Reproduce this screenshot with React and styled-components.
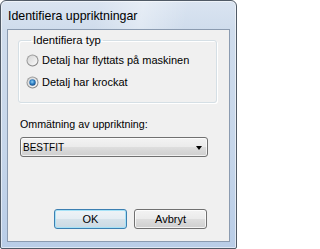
import React from "react";
import styled, { createGlobalStyle } from "styled-components";

const Global = createGlobalStyle`
  html, body { margin: 0; padding: 0; background: #ffffff; }
  body { width: 237px; height: 249px; overflow: hidden; }
  * { box-sizing: border-box; }
`;

const Window = styled.div`
  width: 237px;
  height: 249px;
  display: flex;
  flex-direction: column;
  padding: 0 6px 6px 6px;
  border: 1px solid #505a66;
  border-radius: 6px 6px 2px 2px;
  background: linear-gradient(180deg, #dae4f1 0%, #cfdcec 12%, #c6d6ea 60%, #b9cde7 100%);
  box-shadow: inset 0 0 0 1px rgba(255, 255, 255, 0.55);
  font-family: "Liberation Sans", Arial, sans-serif;
  color: #000;
`;

const TitleBar = styled.div`
  height: 28px;
  display: flex;
  align-items: center;
  padding: 2px 0 0 1px;
  font-size: 12.4px;
  color: #000;
  background: linear-gradient(100deg, rgba(255,255,255,0) 40%, rgba(255,255,255,0.35) 60%, rgba(255,255,255,0) 80%);
`;

const Client = styled.div`
  flex: 1;
  display: flex;
  flex-direction: column;
  background: #f0f0f0;
  border: 1px solid #8b9bb0;
  padding: 4px 0 12px 0;
  font-size: 11px;
`;

const Group = styled.fieldset`
  margin: 0 12px 0 10px;
  padding: 7px 0 13px 7px;
  border: 1px solid #d5dfe5;
  border-radius: 3px;
  box-shadow: inset 1px 1px 0 #ffffff, 1px 1px 0 #ffffff;
  display: flex;
  flex-direction: column;
  gap: 9px;
`;

const Legend = styled.legend`
  margin-left: 5px;
  padding: 0 2px;
  font-size: 11.3px;
  line-height: 13px;
`;

const RadioRow = styled.label`
  display: flex;
  align-items: center;
  gap: 3px;
  height: 13px;
  line-height: 13px;
  font-size: 11px;
`;

const RadioSvg = styled.svg`
  width: 13px;
  height: 13px;
  flex: none;
`;

function Radio({ checked }) {
  return (
    <RadioSvg viewBox="0 0 13 13">
      <defs>
        <linearGradient id="rOuter" x1="0" y1="0" x2="1" y2="1">
          <stop offset="0" stopColor="#a6a6a6" />
          <stop offset="1" stopColor="#7c7c7c" />
        </linearGradient>
        <linearGradient id="rInner" x1="0" y1="0" x2="1" y2="1">
          <stop offset="0" stopColor="#d4d4d4" />
          <stop offset="1" stopColor="#fbfbfb" />
        </linearGradient>
        <radialGradient id="rDot" cx="0.45" cy="0.4" r="0.6">
          <stop offset="0" stopColor="#8fd2f7" />
          <stop offset="0.55" stopColor="#2f7fc4" />
          <stop offset="1" stopColor="#1b4f86" />
        </radialGradient>
      </defs>
      <circle cx="6.5" cy="6.5" r="6" fill="url(#rOuter)" />
      <circle cx="6.5" cy="6.5" r="5" fill="url(#rInner)" />
      {checked && <circle cx="6.5" cy="6.5" r="3.2" fill="url(#rDot)" />}
    </RadioSvg>
  );
}

const FieldLabel = styled.div`
  margin: 15px 0 0 12px;
  line-height: 13px;
  font-size: 10.7px;
`;

const Select = styled.div`
  margin: 6px 21px 0 12px;
  height: 20px;
  display: flex;
  align-items: center;
  justify-content: space-between;
  padding: 0 5px 0 2px;
  border: 1px solid #707070;
  border-radius: 3px;
  background: linear-gradient(180deg, #f3f3f3 0%, #ebebeb 48%, #dddddd 52%, #cfcfcf 100%);
  box-shadow: inset 0 0 0 1px rgba(255, 255, 255, 0.7);
  font-size: 10px;
`;

const Arrow = styled.span`
  width: 0;
  height: 0;
  border-left: 3.5px solid transparent;
  border-right: 3.5px solid transparent;
  border-top: 4px solid #000;
  margin-top: 1px;
`;

const Spacer = styled.div`
  flex: 1;
`;

const ButtonRow = styled.div`
  display: flex;
  justify-content: flex-end;
  gap: 7px;
  padding-right: 22px;
`;

const Button = styled.button`
  width: 73px;
  height: 20px;
  padding: 0;
  margin: 0;
  font-family: "Liberation Sans", Arial, sans-serif;
  font-size: 11px;
  color: #000;
  border-radius: 3px;
  border: 1px solid ${(p) => (p.$default ? "#3c7fb1" : "#707070")};
  background: ${(p) =>
    p.$default
      ? "linear-gradient(180deg, #eef3f7 0%, #e5edf3 48%, #d6e2ea 52%, #cbd9e3 100%)"
      : "linear-gradient(180deg, #f3f3f3 0%, #ebebeb 48%, #dddddd 52%, #cfcfcf 100%)"};
  box-shadow: ${(p) =>
    p.$default
      ? "inset 0 0 0 1px #a6e2f7"
      : "inset 0 0 0 1px rgba(255, 255, 255, 0.75)"};
`;

export default function App() {
  return (
    <>
      <Global />
      <Window>
        <TitleBar>Identifiera uppriktningar</TitleBar>
        <Client>
          <Group>
            <Legend>Identifiera typ</Legend>
            <RadioRow>
              <Radio checked={false} />
              Detalj har flyttats på maskinen
            </RadioRow>
            <RadioRow>
              <Radio checked />
              Detalj har krockat
            </RadioRow>
          </Group>
          <FieldLabel>Ommätning av uppriktning:</FieldLabel>
          <Select>
            <span>BESTFIT</span>
            <Arrow />
          </Select>
          <Spacer />
          <ButtonRow>
            <Button $default>OK</Button>
            <Button>Avbryt</Button>
          </ButtonRow>
        </Client>
      </Window>
    </>
  );
}
